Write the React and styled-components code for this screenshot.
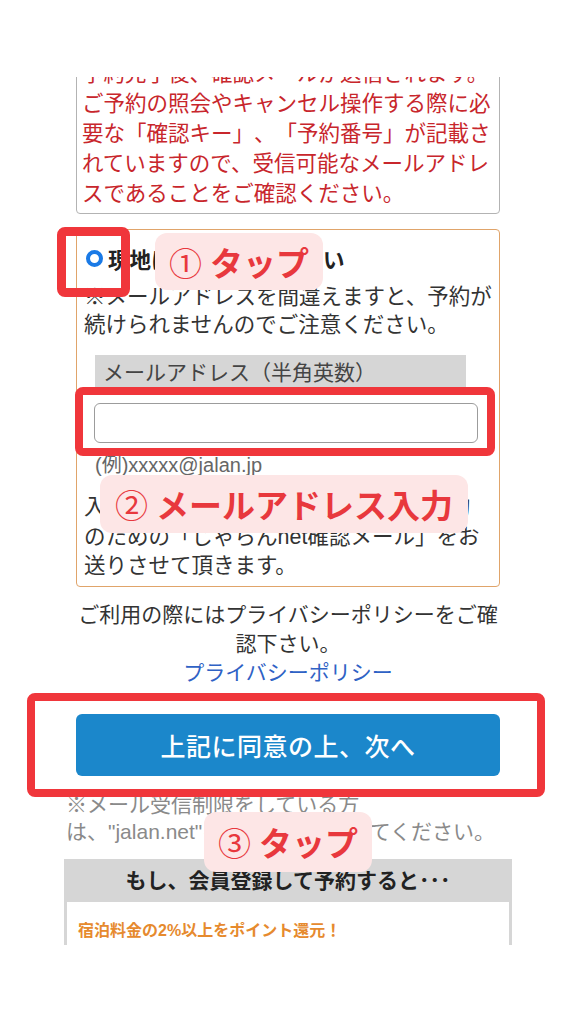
import React from 'react'
import styled, { createGlobalStyle } from 'styled-components'

const GlobalStyle = createGlobalStyle`
  html, body {
    margin: 0;
    padding: 0;
    background: #fff;
  }
  body {
    font-family: "Liberation Sans", "Noto Sans CJK JP", sans-serif;
    color: #333;
    text-spacing-trim: space-all;
  }
`

const App = () => {
  return (
    <Page>
      <GlobalStyle />
      <Viewport>
        <NoticeBox>
          予約完了後、確認メールが送信されます。<br />
          ご予約の照会やキャンセル操作する際に必<br />
          要な「確認キー」、「予約番号」が記載さ<br />
          れていますので、受信可能なメールアドレ<br />
          スであることをご確認ください。
        </NoticeBox>

        <MailBox>
          <RadioRow>
            <Radio />
            <RadioLabel>現地にて料金をお支払い</RadioLabel>
          </RadioRow>
          <Note>
            ※メールアドレスを間違えますと、予約が<br />
            続けられませんのでご注意ください。
          </Note>
          <FieldLabel>メールアドレス（半角英数）</FieldLabel>
          <MailInput type='email' />
          <Example>(例)xxxxx@jalan.jp</Example>
          <Note $top={14} $lh={29.5}>
            入力されたメールアドレス宛に、ご予約<br />
            のための「じゃらんnet確認メール」をお<br />
            送りさせて頂きます。
          </Note>
        </MailBox>

        <Privacy>
          ご利用の際にはプライバシーポリシーをご確<br />
          認下さい。<br />
          <PrivacyLink href='#'>プライバシーポリシー</PrivacyLink>
        </Privacy>

        <NextButton>上記に同意の上、次へ</NextButton>

        <MailNote>
          ※メール受信制限をしている方<br />
          は、"jalan.net"を受信許可設定してください。
        </MailNote>

        <MemberBox>
          <MemberHead>もし、会員登録して予約すると･･･</MemberHead>
          <MemberBody>
            <PointText>宿泊料金の2%以上をポイント還元！</PointText>
          </MemberBody>
        </MemberBox>
      </Viewport>

      {/* 操作説明の注釈 */}
      <Mark $x={57} $y={227} $w={73} $h={70} $b={9} />
      <Callout $x={155} $y={233} $w={168} $h={57} $size={33}>
        <Num>①</Num>タップ
      </Callout>

      <Mark $x={75} $y={387} $w={420} $h={69} $b={8} />
      <Callout $x={100} $y={475} $w={368} $h={58} $size={33}>
        <Num>②</Num>メールアドレス入力
      </Callout>

      <Mark $x={27} $y={693} $w={518} $h={104} $b={8} />
      <Callout $x={204} $y={812} $w={168} $h={60} $size={33}>
        <Num>③</Num>タップ
      </Callout>
    </Page>
  )
}

const Page = styled.div`
  position: relative;
  width: 576px;
  height: 1024px;
  background: #fff;
  overflow: hidden;
`

const Viewport = styled.div`
  margin: 77px 64px 0;
  height: 868px;
  overflow: hidden;
  display: flex;
  flex-direction: column;
`

const NoticeBox = styled.div`
  margin: -25px 12px 0;
  padding: 6px 5px 4px;
  border: 1px solid #b3b3b3;
  border-radius: 4px;
  color: #c8262c;
  font-size: 21.5px;
  line-height: 30px;
  white-space: nowrap;
`

const MailBox = styled.div`
  margin: 15px 12px 0;
  padding: 13px 7px 4px;
  border: 1px solid #e0a46a;
  border-radius: 4px;
`

const RadioRow = styled.div`
  display: flex;
  align-items: center;
  height: 30px;
  padding-left: 2px;
`

const Radio = styled.span`
  box-sizing: border-box;
  width: 17px;
  height: 17px;
  border: 4.5px solid #1a7ae6;
  border-radius: 50%;
  background: #fff;
  margin-right: 5px;
  flex: none;
`

const RadioLabel = styled.span`
  font-size: 21.5px;
  font-weight: 700;
  color: #222;
`

const Note = styled.div`
  margin-top: ${p => p.$top ?? 10}px;
  font-size: 21.5px;
  line-height: ${p => p.$lh ?? 28}px;
  color: #333;
  white-space: nowrap;
`

const FieldLabel = styled.div`
  margin: 16px 0 0 11px;
  width: 371px;
  height: 35px;
  box-sizing: border-box;
  padding-left: 8px;
  background: #d6d6d6;
  color: #444;
  font-size: 21px;
  line-height: 35px;
`

const MailInput = styled.input`
  display: block;
  box-sizing: border-box;
  margin: 13px 0 0 10px;
  width: 384px;
  height: 40px;
  border: 1px solid #9c9c9c;
  border-radius: 6px;
  background: #fff;
  outline: none;
`

const Example = styled.div`
  margin: 8px 0 0 11px;
  font-size: 20px;
  line-height: 28px;
  color: #666;
`

const Privacy = styled.div`
  margin-top: 13px;
  text-align: center;
  font-size: 21px;
  line-height: 29px;
  color: #333;
  white-space: nowrap;
`

const PrivacyLink = styled.a`
  color: #2f62c5;
  text-decoration: none;
`

const NextButton = styled.button`
  margin: 27px 12px 0;
  height: 62px;
  border: none;
  border-radius: 6px;
  background: #1b87cb;
  color: #fff;
  font-family: inherit;
  font-size: 25px;
  font-weight: 500;
  letter-spacing: 0.5px;
  flex: none;
`

const MailNote = styled.div`
  margin-top: 15px;
  padding-left: 2px;
  font-size: 21px;
  line-height: 27px;
  color: #8a8a8a;
  white-space: nowrap;
`

const MemberBox = styled.div`
  margin-top: 14px;
  border: 3px solid #d6d6d6;
  border-top: none;
  flex: none;
`

const MemberHead = styled.div`
  height: 43px;
  background: #d6d6d6;
  text-align: center;
  font-size: 21px;
  font-weight: 700;
  line-height: 43px;
  color: #222;
`

const MemberBody = styled.div`
  padding: 15px 11px 20px;
  background: #fff;
`

const PointText = styled.div`
  font-size: 16px;
  font-weight: 700;
  line-height: 28px;
  color: #e68a2e;
`

const Mark = styled.div`
  position: absolute;
  left: ${p => p.$x}px;
  top: ${p => p.$y}px;
  width: ${p => p.$w}px;
  height: ${p => p.$h}px;
  box-sizing: border-box;
  border: ${p => p.$b}px solid #f0363b;
  border-radius: 8px;
`

const Callout = styled.div`
  position: absolute;
  left: ${p => p.$x}px;
  top: ${p => p.$y}px;
  width: ${p => p.$w}px;
  height: ${p => p.$h}px;
  display: flex;
  align-items: center;
  justify-content: center;
  background: #fde6e6;
  border-radius: 12px;
  color: #e8383d;
  font-size: ${p => p.$size}px;
  font-weight: 700;
  white-space: nowrap;
`

const Num = styled.span`
  font-weight: 400;
  margin-right: 8px;
`

export default App
